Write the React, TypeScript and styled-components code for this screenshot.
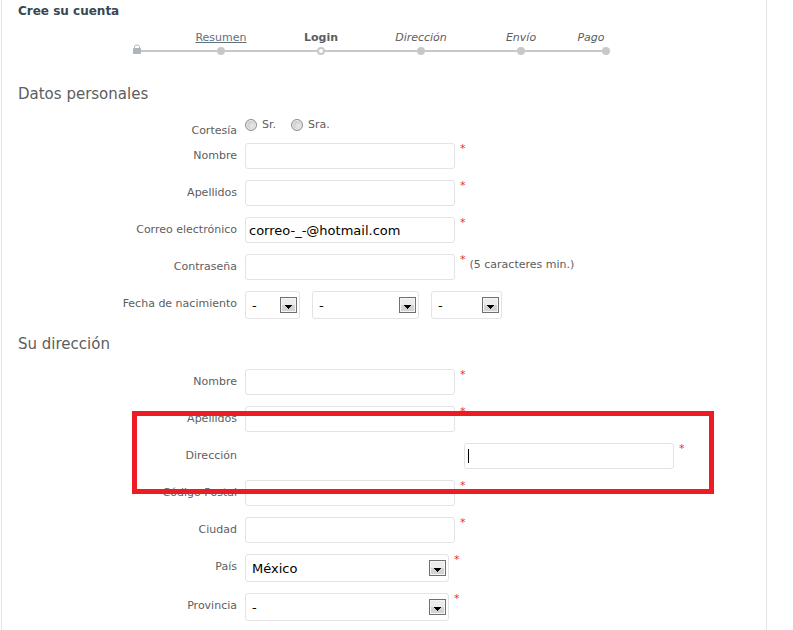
import React from "react";
import styled, { createGlobalStyle, css } from "styled-components";

const GlobalStyle = createGlobalStyle`
  * { box-sizing: border-box; }
  body {
    margin: 0;
    background: #fff;
    color: #5d5d60;
    font: 11px/26px Verdana, "DejaVu Sans", sans-serif;
  }
`;

const Page = styled.main`
  margin: 0 26px 0 1px;
  padding: 0 16px 9px;
  border: solid #e3e3e6;
  border-width: 0 1px;
`;

const PageTitle = styled.h1`
  margin: 0;
  color: #374853;
  font-size: 12px;
  font-weight: bold;
  line-height: 22px;
`;

const Steps = styled.ol`
  display: grid;
  grid-template-columns: 38px repeat(4, 100px) 40px;
  align-items: end;
  margin: 8px 0 0 115px;
  padding: 0;
  list-style: none;
`;

const Step = styled.li`
  display: flex;
  flex-direction: column;
  text-align: center;
  line-height: 16px;
`;

const StepLink = styled.a`
  color: #5d717e;
`;

const Track = styled.div<{ $start?: boolean; $last?: boolean }>`
  display: flex;
  align-items: center;
  justify-content: center;
  height: 10px;
  padding-right: ${(p) => (p.$last ? "1px" : "0")};

  &::before,
  &::after {
    content: "";
    flex: 1;
    height: 2px;
    background: #c7c8cc;
  }
  &::before {
    display: ${(p) => (p.$start ? "none" : "block")};
  }
  &::after {
    display: ${(p) => (p.$last ? "none" : "block")};
  }
`;

const Dot = styled.span<{ $current?: boolean }>`
  width: 8px;
  height: 8px;
  border: ${(p) => (p.$current ? "2px" : "4px")} solid #c7c8cc;
  border-radius: 50%;
`;

const Section = styled.fieldset<{ $spaced?: boolean }>`
  min-width: 0;
  margin: ${(p) => (p.$spaced ? "15px" : "28px")} 0 0;
  padding: 0;
  border: 0;
`;

const SectionTitle = styled.legend`
  padding: 0;
  font-size: 15px;
  line-height: 20px;
`;

const Rows = styled.div<{ $gap: string }>`
  position: relative;
  display: grid;
  row-gap: 11px;
  padding-top: ${(p) => p.$gap};
`;

const Row = styled.div`
  display: flex;
  align-items: flex-start;
`;

const labelStyle = css`
  flex: none;
  width: 219px;
  margin-right: 8px;
  text-align: right;
`;

const Label = styled.label`
  ${labelStyle}
`;

const GroupLabel = styled.span`
  ${labelStyle}
`;

const CourtesyRow = styled(Row)`
  margin-bottom: -11px;
  line-height: 24px;

  ${GroupLabel} {
    padding-top: 6px;
  }
`;

const Choice = styled.label`
  display: flex;
  align-items: center;
  gap: 5px;
  margin-right: 15px;
`;

const Radio = styled.input`
  appearance: none;
  width: 12px;
  height: 12px;
  margin: 0;
  border: 1px solid #8a8b8c;
  border-radius: 50%;
  background: radial-gradient(circle at 60% 60%, #e9ebec, #c3c7cb 70%);
  box-shadow: inset 0 0 0 1px #f2f2f2;

  &:checked {
    background: radial-gradient(circle, #31617c 30%, #dfe2e4 40%);
  }
`;

const TextBox = styled.input<{ $shifted?: boolean }>`
  width: 210px;
  height: 26px;
  margin: 0 0 0 ${(p) => (p.$shifted ? "219px" : "0")};
  padding: 0 3px;
  border: 1px solid #e3e3e6;
  border-radius: 3px;
  outline: none;
  color: #000;
  font: 13px Verdana, "DejaVu Sans", sans-serif;
  background: ${(p) =>
    p.$shifted
      ? "linear-gradient(#000, #000) 3px 5px / 1px 14px no-repeat #fff"
      : "#fff"};
`;

const Required = styled.sup`
  margin-left: 5px;
  color: #e0303f;
  font-size: 11px;
  line-height: 12px;
`;

const Hint = styled.span`
  margin-left: 4px;
  line-height: 22px;
`;

const SelectFrame = styled.div<{ $width: string }>`
  position: relative;
  width: ${(p) => p.$width};

  & + & {
    margin-left: 12px;
  }
`;

const Picker = styled.select`
  display: block;
  appearance: none;
  width: 100%;
  height: 28px;
  padding: 0 24px 0 6px;
  border: 1px solid #e3e3e6;
  border-radius: 3px;
  color: #000;
  background: #fff;
  font: 13px Verdana, "DejaVu Sans", sans-serif;
`;

const Arrow = styled.svg`
  position: absolute;
  top: 6px;
  right: 3px;
  pointer-events: none;
`;

const Highlight = styled.div`
  position: absolute;
  top: 57px;
  left: 114px;
  width: 582px;
  height: 83px;
  border: 5px solid #ed1c24;
  pointer-events: none;
`;

const Lock = styled.svg`
  flex: none;
  margin-top: -4px;
`;

function LockIcon() {
  return (
    <Lock width="8" height="10" viewBox="0 0 8 10" aria-hidden="true">
      <path d="M1.5 5V2.5Q1.5 1 4 1t2.500 1.500V5" fill="none" stroke="#aeb4ba" />
      <rect y="4" width="8" height="6" rx="1" fill="#aeb4ba" />
    </Lock>
  );
}

function Field(props: {
  id: string;
  label: string;
  type?: string;
  value?: string;
  hint?: string;
  shifted?: boolean;
}) {
  return (
    <Row>
      <Label htmlFor={props.id}>{props.label}</Label>
      <TextBox
        id={props.id}
        type={props.type ?? "text"}
        defaultValue={props.value}
        $shifted={props.shifted}
        required
      />
      <Required>*</Required>
      {props.hint && <Hint>{props.hint}</Hint>}
    </Row>
  );
}

function Select(props: { id: string; value: string; width: string; name?: string }) {
  return (
    <SelectFrame $width={props.width}>
      <Picker id={props.id} aria-label={props.name}>
        <option>{props.value}</option>
      </Picker>
      <Arrow width="17" height="16" viewBox="0 0 17 16" aria-hidden="true">
        <rect x=".5" y=".5" width="16" height="15" fill="#f5f5f5" stroke="#707070" />
        <path d="M2 2h13v6H2z" fill="#ececec" />
        <path d="M2 8h13v6H2z" fill="#d3d3d3" />
        <path d="M5 8h7v1h-1v1h-1v1H9v1H8v-1H7v-1H6V9H5z" fill="#000" />
      </Arrow>
    </SelectFrame>
  );
}

export default function App() {
  return (
    <>
      <GlobalStyle />
      <Page>
        <PageTitle>Cree su cuenta</PageTitle>
        <Steps>
          <Step>
            <Track $start>
              <LockIcon />
            </Track>
          </Step>
          <Step>
            <span>
              <StepLink href="#resumen">Resumen</StepLink>
            </span>
            <Track>
              <Dot />
            </Track>
          </Step>
          <Step aria-current="step">
            <b>Login</b>
            <Track>
              <Dot $current />
            </Track>
          </Step>
          <Step>
            <i>Dirección</i>
            <Track>
              <Dot />
            </Track>
          </Step>
          <Step>
            <i>Envío</i>
            <Track>
              <Dot />
            </Track>
          </Step>
          <Step>
            <i>Pago</i>
            <Track $last>
              <Dot />
            </Track>
          </Step>
        </Steps>

        <form>
          <Section>
            <SectionTitle>Datos personales</SectionTitle>
            <Rows $gap="9px">
              <CourtesyRow role="radiogroup" aria-labelledby="courtesy">
                <GroupLabel id="courtesy">Cortesía</GroupLabel>
                <Choice>
                  <Radio type="radio" name="courtesy" />
                  Sr.
                </Choice>
                <Choice>
                  <Radio type="radio" name="courtesy" />
                  Sra.
                </Choice>
              </CourtesyRow>
              <Field id="name" label="Nombre" />
              <Field id="surname" label="Apellidos" />
              <Field
                id="email"
                label="Correo electrónico"
                type="email"
                value="correo-_-@hotmail.com"
              />
              <Field
                id="password"
                label="Contraseña"
                type="password"
                hint="(5 caracteres min.)"
              />
              <Row>
                <Label htmlFor="day">Fecha de nacimiento</Label>
                <Select id="day" value="-" width="55px" />
                <Select id="month" value="-" width="107px" name="Mes" />
                <Select id="year" value="-" width="71px" name="Año" />
              </Row>
            </Rows>
          </Section>

          <Section $spaced>
            <SectionTitle>Su dirección</SectionTitle>
            <Rows $gap="15px">
              <Field id="address-name" label="Nombre" />
              <Field id="address-surname" label="Apellidos" />
              <Field id="address" label="Dirección" shifted />
              <Field id="postcode" label="Código Postal" />
              <Field id="city" label="Ciudad" />
              <Row>
                <Label htmlFor="country">País</Label>
                <Select id="country" value="México" width="204px" />
                <Required>*</Required>
              </Row>
              <Row>
                <Label htmlFor="province">Provincia</Label>
                <Select id="province" value="-" width="204px" />
                <Required>*</Required>
              </Row>
              <Highlight />
            </Rows>
          </Section>
        </form>
      </Page>
    </>
  );
}
